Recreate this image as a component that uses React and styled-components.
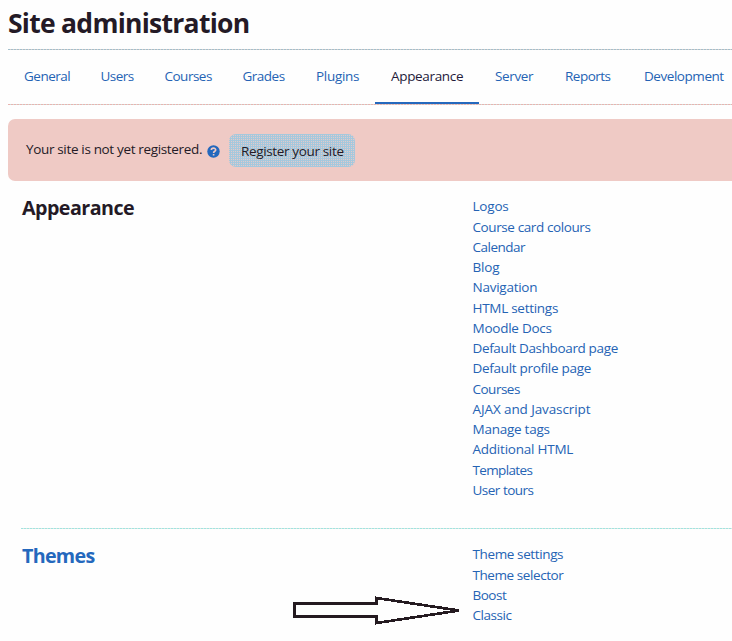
import React from "react";
import styled, { createGlobalStyle } from "styled-components";

const Global = createGlobalStyle`
  * { box-sizing: border-box; }
  html, body { margin: 0; overflow: hidden; background: #fefefe; }
  body { font: 13.5px/20.25px "Open Sans", "Noto Sans", sans-serif; color: #241a26; }
`;

const Page = styled.main`
  position: relative;
  width: 732px;
  height: 641px;
  padding-left: 8px;
  overflow: hidden;
  background: #fefefe;
`;

const Title = styled.h1`
  margin: 0;
  height: 49px;
  font-size: 26.5px;
  line-height: 47px;
  font-weight: 700;
  letter-spacing: -0.73px;
  white-space: nowrap;
`;

const Tabs = styled.nav`
  display: flex;
  height: 56px;
  background:
    repeating-linear-gradient(90deg, #a3bfcc 0 2px, #d9cdca 2px 3px) 0 0 / 100% 1px no-repeat,
    repeating-linear-gradient(90deg, #e8b4b0 0 2px, #cfdcd8 2px 3px) 0 55px / 100% 1px no-repeat;
`;

const Tab = styled.a`
  flex: none;
  width: ${(p) => p.$width}px;
  height: 55px;
  padding: 17px 0 0 16px;
  border-bottom: 2px solid ${(p) => (p.$active ? "#2468bd" : "transparent")};
  color: ${(p) => (p.$active ? "#241a3a" : "#2563b4")};
  letter-spacing: ${(p) => p.$track}px;
  white-space: nowrap;
`;

const Alert = styled.section`
  display: flex;
  height: 62px;
  margin-top: 14px;
  padding: 15px 0 0 18px;
  border-radius: 7px 0 0 7px;
  background: #efcac5;
`;

const AlertText = styled.span`
  width: 181px;
  padding-top: 5px;
  letter-spacing: -0.34px;
  white-space: nowrap;
`;

const Help = styled.svg`
  width: 13px;
  height: 13px;
  margin: 10.5px 9px 0 0;
`;

const Register = styled.button`
  width: 126px;
  height: 33px;
  padding: 2px 0 0 12px;
  border: 0;
  border-radius: 7px;
  background:
    repeating-linear-gradient(180deg, #a5c8dd 0 1px, transparent 1px 2px),
    repeating-linear-gradient(90deg, #e3cbca 0 1px, #a5c8dd 1px 2px);
  color: #241a26;
  font: inherit;
  text-align: left;
  letter-spacing: -0.35px;
  white-space: nowrap;
`;

const Group = styled.section`
  display: grid;
  grid-template-columns: 450.5px 1fr;
  margin-left: 13px;
  padding-left: 1px;
  height: ${(p) => p.$height}px;
  padding-top: 15px;
`;

const Divider = styled.div`
  height: 1px;
  margin-left: 13px;
  background: repeating-linear-gradient(90deg, #a0e4e0 0 2px, #dde6e0 2px 3px);
`;

const Heading = styled.h2`
  margin: 0;
  font-size: 19.7px;
  line-height: 23.6px;
  letter-spacing: ${(p) => (p.$link ? -0.7 : -0.55)}px;
  color: ${(p) => (p.$link ? "#2468bd" : "#241a26")};
`;

const Links = styled.ul`
  margin: 0.3px 0 0;
  padding: 0;
  list-style: none;
`;

const Link = styled.li`
  height: 20.25px;
  color: #2563b4;
  letter-spacing: ${(p) => p.$track}px;
  white-space: nowrap;
`;

const Arrow = styled.svg`
  position: absolute;
  left: 290px;
  top: 592px;
  width: 175px;
  height: 36px;
`;

const tabs = [
  ["General", 76.5, -0.5], ["Users", 64, -0.5], ["Courses", 78, -0.5],
  ["Grades", 73.5, -0.5], ["Plugins", 75, -0.3], ["Appearance", 104, -0.33],
  ["Server", 70, -0.35], ["Reports", 79, -0.5], ["Development", 112, -0.45],
];

const appearance = [
  ["Logos", -0.2], ["Course card colours", -0.4], ["Calendar", -0.5],
  ["Blog", -0.2], ["Navigation", -0.25], ["HTML settings", -0.28],
  ["Moodle Docs", -0.25], ["Default Dashboard page", -0.36],
  ["Default profile page", -0.3], ["Courses", -0.5],
  ["AJAX and Javascript", -0.1], ["Manage tags", -0.25],
  ["Additional HTML", -0.23], ["Templates", -0.65], ["User tours", -0.5],
];

const themes = [
  ["Theme settings", -0.38], ["Theme selector", -0.42],
  ["Boost", -0.5], ["Classic", -0.45],
];

const LinkList = ({ items }) => (
  <Links>
    {items.map(([label, track]) => (
      <Link key={label} $track={track}>{label}</Link>
    ))}
  </Links>
);

export default function App() {
  return (
    <Page>
      <Global />
      <Title>Site administration</Title>
      <Tabs>
        {tabs.map(([label, width, track]) => (
          <Tab key={label} $width={width} $track={track} $active={label === "Appearance"}>
            {label}
          </Tab>
        ))}
      </Tabs>
      <Alert>
        <AlertText>Your site is not yet registered.</AlertText>
        <Help viewBox="0 0 13 13">
          <circle cx="6.5" cy="6.5" r="6.2" fill="#2468bd" />
          <path d="M4.3 5.1C4.3 2.5 8.7 2.4 8.7 5C8.7 6.4 6.6 6.2 6.6 8M6.6 9.1V10.6" fill="none" stroke="#efcac5" strokeWidth="1.6" />
        </Help>
        <Register>Register your site</Register>
      </Alert>
      <Group $height={347}>
        <Heading>Appearance</Heading>
        <LinkList items={appearance} />
      </Group>
      <Divider />
      <Group $height={112}>
        <Heading $link>Themes</Heading>
        <LinkList items={themes} />
      </Group>
      <Arrow viewBox="0 0 175 36">
        <path
          d="M4.5 11.5H86.5V6L169 18.5L86.5 31V24.5H4.5Z"
          fill="#fefefe" stroke="#241a20" strokeWidth="2.7" shapeRendering="crispEdges"
        />
      </Arrow>
    </Page>
  );
}
